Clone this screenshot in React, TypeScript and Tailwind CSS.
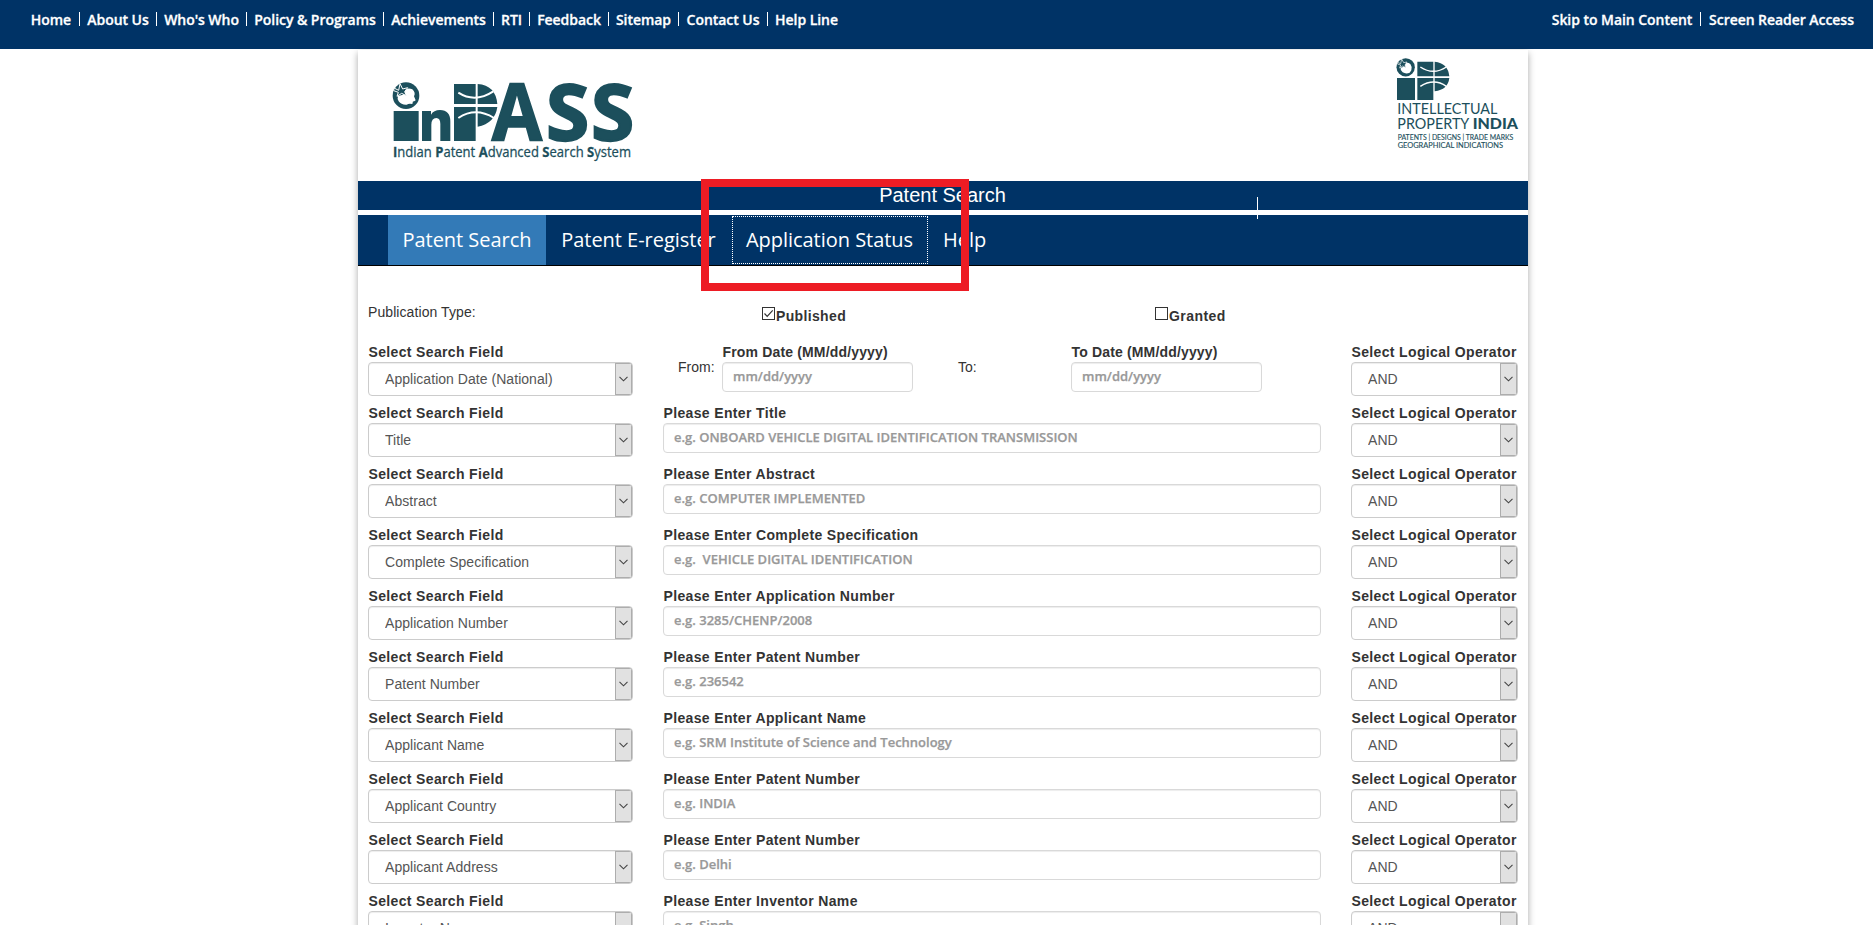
import React from "react";

type Link = { text: string; box: string };

const leftLinks: Link[] = [
  { text: "Home", box: "w-[57px]" },
  { text: "About Us", box: "w-[77px]" },
  { text: "Who's Who", box: "w-[90px]" },
  { text: "Policy & Programs", box: "w-[137px]" },
  { text: "Achievements", box: "w-[110px]" },
  { text: "RTI", box: "w-[36px]" },
  { text: "Feedback", box: "w-[79px]" },
  { text: "Sitemap", box: "w-[70px]" },
  { text: "Contact Us", box: "w-[89px]" },
  { text: "Help Line", box: "w-[77px]" },
];

const rightLinks: Link[] = [
  { text: "Skip to Main Content", box: "w-[157px]" },
  { text: "Screen Reader Access", box: "w-[161px]" },
];

const rows = [
  { field: "Title", label: "Please Enter Title", hint: "e.g. ONBOARD VEHICLE DIGITAL IDENTIFICATION TRANSMISSION" },
  { field: "Abstract", label: "Please Enter Abstract", hint: "e.g. COMPUTER IMPLEMENTED" },
  { field: "Complete Specification", label: "Please Enter Complete Specification", hint: "e.g.  VEHICLE DIGITAL IDENTIFICATION" },
  { field: "Application Number", label: "Please Enter Application Number", hint: "e.g. 3285/CHENP/2008" },
  { field: "Patent Number", label: "Please Enter Patent Number", hint: "e.g. 236542" },
  { field: "Applicant Name", label: "Please Enter Applicant Name", hint: "e.g. SRM Institute of Science and Technology" },
  { field: "Applicant Country", label: "Please Enter Patent Number", hint: "e.g. INDIA" },
  { field: "Applicant Address", label: "Please Enter Patent Number", hint: "e.g. Delhi" },
  { field: "Inventor Name", label: "Please Enter Inventor Name", hint: "e.g. Singh" },
];

function LinkList({ links }: { links: Link[] }) {
  return (
    <ul className="flex">
      {links.map((l, i) => (
        <li
          key={l.text}
          className={`${l.box} h-[14px] whitespace-nowrap text-center font-['Open_Sans',sans-serif] text-[14px] font-semibold leading-[16px] tracking-[-0.05px] text-white [-webkit-text-stroke:0.3px_white] ${
            i < links.length - 1 ? "border-r border-white" : ""
          }`}
        >
          {l.text}
        </li>
      ))}
    </ul>
  );
}

function Label({ tight, children }: { tight?: boolean; children: React.ReactNode }) {
  return (
    <label
      className={`block h-[20px] whitespace-nowrap pl-[0.5px] text-[14px] font-bold leading-[20px] ${
        tight ? "tracking-[0.16px]" : "tracking-[0.35px]"
      }`}
    >
      {children}
    </label>
  );
}

function SelectBox({ value }: { value: string }) {
  return (
    <div className="flex h-[34px] overflow-hidden rounded-[4px] border border-[#ccc] bg-white shadow-[inset_0_1px_1px_rgba(0,0,0,0.075)]">
      <select className="min-w-0 flex-1 appearance-none bg-transparent pl-[16px] text-[14px] tracking-[0.04px] text-[#555] outline-none">
        <option>{value}</option>
      </select>
      <span className="flex w-[17px] items-center justify-center border border-[#adadad] bg-[#e1e1e1]">
        <svg width="9" height="6" viewBox="0 0 9 6" fill="none" stroke="#444" strokeWidth="1.1">
          <path d="M0.5 0.8 4.5 4.8 8.5 0.8" />
        </svg>
      </span>
    </div>
  );
}

function TextBox({ hint }: { hint: string }) {
  return (
    <input
      placeholder={hint}
      className="block h-[30px] w-full rounded-[4px] border border-[#d9d9d9] bg-white px-[10px] pb-[2px] font-['Open_Sans',sans-serif] text-[13px] font-semibold text-[#999] shadow-[inset_0_1px_1px_rgba(0,0,0,0.075)] outline-none placeholder:text-[#999] placeholder:[-webkit-text-stroke:0.25px_#999]"
    />
  );
}

function Row({ field, children }: { field: string; children: React.ReactNode }) {
  return (
    <div className="flex h-[61px] px-[10px]">
      <div className="w-[265px]">
        <Label>Select Search Field</Label>
        <SelectBox value={field} />
      </div>
      <div className="ml-[30px] w-[658px]">{children}</div>
      <div className="ml-[30px] w-[167px]">
        <Label>Select Logical Operator</Label>
        <SelectBox value="AND" />
      </div>
    </div>
  );
}

function InpassLogo() {
  return (
    <svg width="242" height="80" viewBox="130 66 726 240" className="overflow-visible" fill="#1c4f5c" fontFamily="'Open Sans', sans-serif">
      <circle cx="169" cy="107" r="40" />
      <path
        d="M164 90 Q176 82 188 88 Q199 98 193 109 L198 121 Q194 125 190 124 L188 132 Q178 129 171 134 Q155 135 147 124 Q142 116 145 108 L160 104 Z"
        fill="#fff"
      />
      <path
        d="M133 84 L147 91 L151 71 L159 87 L174 83 L165 95 L170 107 L156 100 L142 109 L146 97 L132 92 Z"
        stroke="#fff"
        strokeWidth="3"
      />
      <path d="M132 153 H207 V243 H132 Z" />
      <path d="M217 153 H244 V164 Q252 150 271 150 Q302 151 302 184 V243 H272 V192 Q272 174 260 174 Q245 175 245 194 V243 H217 Z" />
      <path d="M313 72 H378 V132 H313 Z M313 141 H378 V243 H313 Z M384 72 Q438 76 443 132 H384 Z M384 141 H443 Q436 190 384 200 Z" />
      <path d="M326 98 Q376 130 431 94 M326 174 Q378 140 433 174" fill="none" stroke="#fff" strokeWidth="6" />
      <text x="426" y="241" fontSize="235" fontWeight="700" stroke="#1c4f5c" strokeWidth="5" textLength="151" lengthAdjust="spacingAndGlyphs">
        A
      </text>
      <text x="590" y="241" fontSize="233" fontWeight="700" stroke="#1c4f5c" strokeWidth="7">
        S
      </text>
      <text x="725" y="241" fontSize="233" fontWeight="700" stroke="#1c4f5c" strokeWidth="7">
        S
      </text>
      <text x="130" y="290" fontSize="41" stroke="#1c4f5c" strokeWidth="0.8" textLength="714" lengthAdjust="spacingAndGlyphs">
        <tspan fontWeight="700">I</tspan>ndian <tspan fontWeight="700">P</tspan>atent <tspan fontWeight="700">A</tspan>dvanced{" "}
        <tspan fontWeight="700">S</tspan>earch <tspan fontWeight="700">S</tspan>ystem
      </text>
    </svg>
  );
}

function IpIndiaLogo() {
  return (
    <svg width="124" height="92" viewBox="78 36 372 276" fill="#1c4f5c" fontFamily="Lato, sans-serif">
      <circle cx="107" cy="67" r="27.5" />
      <path d="M103 56 Q112 50 121 57 L125 66 L124 76 L119 83 Q108 88 98 82 Q90 76 92 68 L102 65 Z" fill="#fff" />
      <path d="M82 52 L92 56 L95 42 L101 53 L111 51 L105 60 L108 68 L98 63 L89 69 L92 60 L82 57 Z" stroke="#fff" strokeWidth="2" />
      <path d="M81 99 H135 V165 H81 Z" />
      <path d="M142 50 H190 V94 H142 Z M142 99 H190 V165 H142 Z M194 50 Q234 54 238 94 H194 Z M194 99 H238 Q234 134 194 139 Z" />
      <path d="M151 66 Q190 92 229 66 M151 124 Q192 98 229 124" fill="none" stroke="#fff" strokeWidth="4.5" />
      <text x="82" y="207" fontSize="44" textLength="300" lengthAdjust="spacingAndGlyphs">INTELLECTUAL</text>
      <text x="82" y="252" fontSize="44" textLength="216" lengthAdjust="spacingAndGlyphs">PROPERTY</text>
      <text x="308" y="252" fontSize="44" fontWeight="900" textLength="136" lengthAdjust="spacingAndGlyphs">INDIA</text>
      <text x="83" y="284" fontSize="23" stroke="#1c4f5c" strokeWidth="0.4" textLength="347" lengthAdjust="spacingAndGlyphs">PATENTS | DESIGNS | TRADE MARKS</text>
      <text x="83" y="308" fontSize="23" stroke="#1c4f5c" strokeWidth="0.4" textLength="316" lengthAdjust="spacingAndGlyphs">GEOGRAPHICAL INDICATIONS</text>
    </svg>
  );
}

export default function App() {
  return (
    <div className="h-[925px] w-[1873px] overflow-hidden bg-white font-['Liberation_Sans',Arial,sans-serif] text-[14px] text-[#333]">
      <header className="flex h-[49px] justify-between bg-[#003366] pl-[23px] pr-[11px] pt-[12px]">
        <LinkList links={leftLinks} />
        <LinkList links={rightLinks} />
      </header>

      <main className="relative ml-[358px] mt-px h-[900px] w-[1170px] bg-white shadow-[0_3px_7px_rgba(0,0,0,0.35)]">
        <div className="flex h-[131px] items-start justify-between pl-[35px] pr-[8px]">
          <div className="pt-[32px]">
            <InpassLogo />
          </div>
          <div className="pt-[7px]">
            <IpIndiaLogo />
          </div>
        </div>

        <div className="h-[29px] bg-[#003366] pr-px text-center text-[20px] leading-[28px] text-white">Patent Search</div>

        <nav className="mt-[5px] flex h-[51px] border-b border-black bg-[#003366] pl-[30px] font-['Open_Sans',sans-serif] text-[20px] leading-[49px] tracking-[-0.03px] text-white">
          <a className="w-[158px] whitespace-nowrap bg-[#337ab7] text-center">Patent Search</a>
          <a className="w-[186px] whitespace-nowrap pr-px text-center">Patent E-register</a>
          <a className="mt-px h-[48px] w-[196px] whitespace-nowrap border border-dotted border-white pr-px text-center leading-[45px]">
            Application Status
          </a>
          <a className="pl-[15px]">Help</a>
        </nav>

        <div className="flex h-[76px] px-[10px] leading-[20px]">
          <div className="w-[394px] pt-[36px] tracking-[0.08px]">Publication Type:</div>
          <label className="flex w-[393px] pt-[40px] font-bold tracking-[0.35px]">
            <span className="mr-px mt-px h-[13px] w-[13px] border border-[#333]">
              <svg width="11" height="11" viewBox="0 0 11 11" fill="none" stroke="#333" strokeWidth="1.2">
                <path d="M1.5 5.5 4.2 8.3 9.7 2.4" />
              </svg>
            </span>
            Published
          </label>
          <label className="flex pt-[40px] font-bold tracking-[0.45px]">
            <span className="mr-px mt-px h-[13px] w-[13px] border border-[#333]" />
            Granted
          </label>
        </div>

        <Row field="Application Date (National)">
          <div className="flex">
            <span className="w-[59px] pl-[15px] pt-[15px] leading-[20px]">From:</span>
            <div className="w-[191px]">
              <Label tight>From Date (MM/dd/yyyy)</Label>
              <TextBox hint="mm/dd/yyyy" />
            </div>
            <span className="ml-[45px] w-[113px] pt-[15px] leading-[20px]">To:</span>
            <div className="w-[191px]">
              <Label tight>To Date (MM/dd/yyyy)</Label>
              <TextBox hint="mm/dd/yyyy" />
            </div>
          </div>
        </Row>

        {rows.map((r) => (
          <Row key={r.field} field={r.field}>
            <Label>{r.label}</Label>
            <TextBox hint={r.hint} />
          </Row>
        ))}

        <div className="absolute left-[899px] top-[147px] h-[22px] w-px bg-white" />
        <div className="absolute left-[343px] top-[129px] h-[112px] w-[268px] border-8 border-[#ed1c24]" />
      </main>
    </div>
  );
}
